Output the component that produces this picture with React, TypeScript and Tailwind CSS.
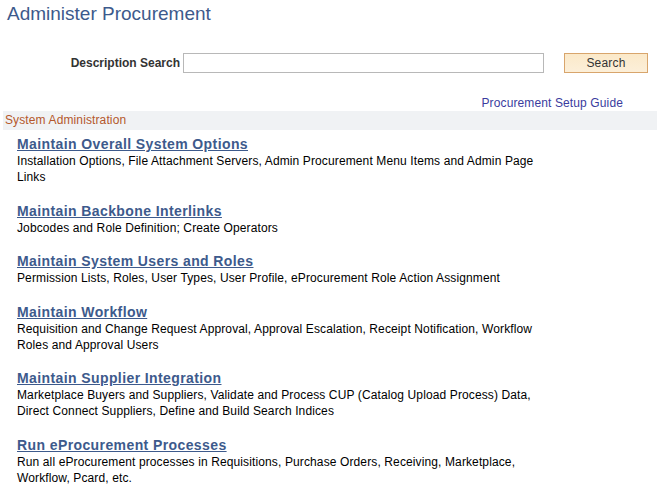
import React from "react";

const sections = [
  {
    title: "Maintain Overall System Options",
    desc: "Installation Options, File Attachment Servers, Admin Procurement Menu Items and Admin Page Links",
  },
  {
    title: "Maintain Backbone Interlinks",
    desc: "Jobcodes and Role Definition; Create Operators",
  },
  {
    title: "Maintain System Users and Roles",
    desc: "Permission Lists, Roles, User Types, User Profile, eProcurement Role Action Assignment",
  },
  {
    title: "Maintain Workflow",
    desc: "Requisition and Change Request Approval, Approval Escalation, Receipt Notification, Workflow Roles and Approval Users",
  },
  {
    title: "Maintain Supplier Integration",
    desc: "Marketplace Buyers and Suppliers, Validate and Process CUP (Catalog Upload Process) Data, Direct Connect Suppliers, Define and Build Search Indices",
  },
  {
    title: "Run eProcurement Processes",
    desc: "Run all eProcurement processes in Requisitions, Purchase Orders, Receiving, Marketplace, Workflow, Pcard, etc.",
  },
];

export default function App() {
  return (
    <div className="min-h-screen bg-white font-['Liberation_Sans',Arial,sans-serif]">
      {/* page title */}
      <h1 className="pl-[7px] text-[19px] leading-[28px] text-[#3d5a8c]">Administer Procurement</h1>

      {/* search row */}
      <div className="mt-[25px] flex items-center">
        <label className="w-[180px] text-right text-[12px] font-bold text-[#333]">Description Search</label>
        <input className="ml-[3px] h-[20px] w-[361px] border border-[#b8b8b8] bg-white px-1 text-[12px] outline-none" />
        <button className="ml-[20px] h-[20px] w-[84px] border border-[#d8a56c] bg-gradient-to-b from-[#fbe9c9] to-[#fcefd9] text-[12px] leading-[18px] tracking-[0.2px] text-[#333]">
          Search
        </button>
      </div>

      <div className="mt-[22px] flex justify-end pr-[34px]">
        <a className="text-[12px] leading-[16px] tracking-[0.12px] text-[#3a3c9e]">Procurement Setup Guide</a>
      </div>

      {/* group header */}
      <div className="ml-[3px] h-[19px] bg-[#f0f2f4] pl-[2px] text-[12px] leading-[19px] tracking-[0.12px] text-[#b4582c]">
        System Administration
      </div>

      <div className="mt-[5px] flex flex-col gap-[16.5px] pl-[17px]">
        {sections.map((s) => (
          <div key={s.title} className="w-[540px]">
            <a className="block w-fit text-[14px] font-bold leading-[18px] tracking-[0.4px] text-[#3d5a8c] underline">
              {s.title}
            </a>
            <p className="text-[12px] leading-[16px] tracking-[0.12px] text-black">{s.desc}</p>
          </div>
        ))}
      </div>
    </div>
  );
}
